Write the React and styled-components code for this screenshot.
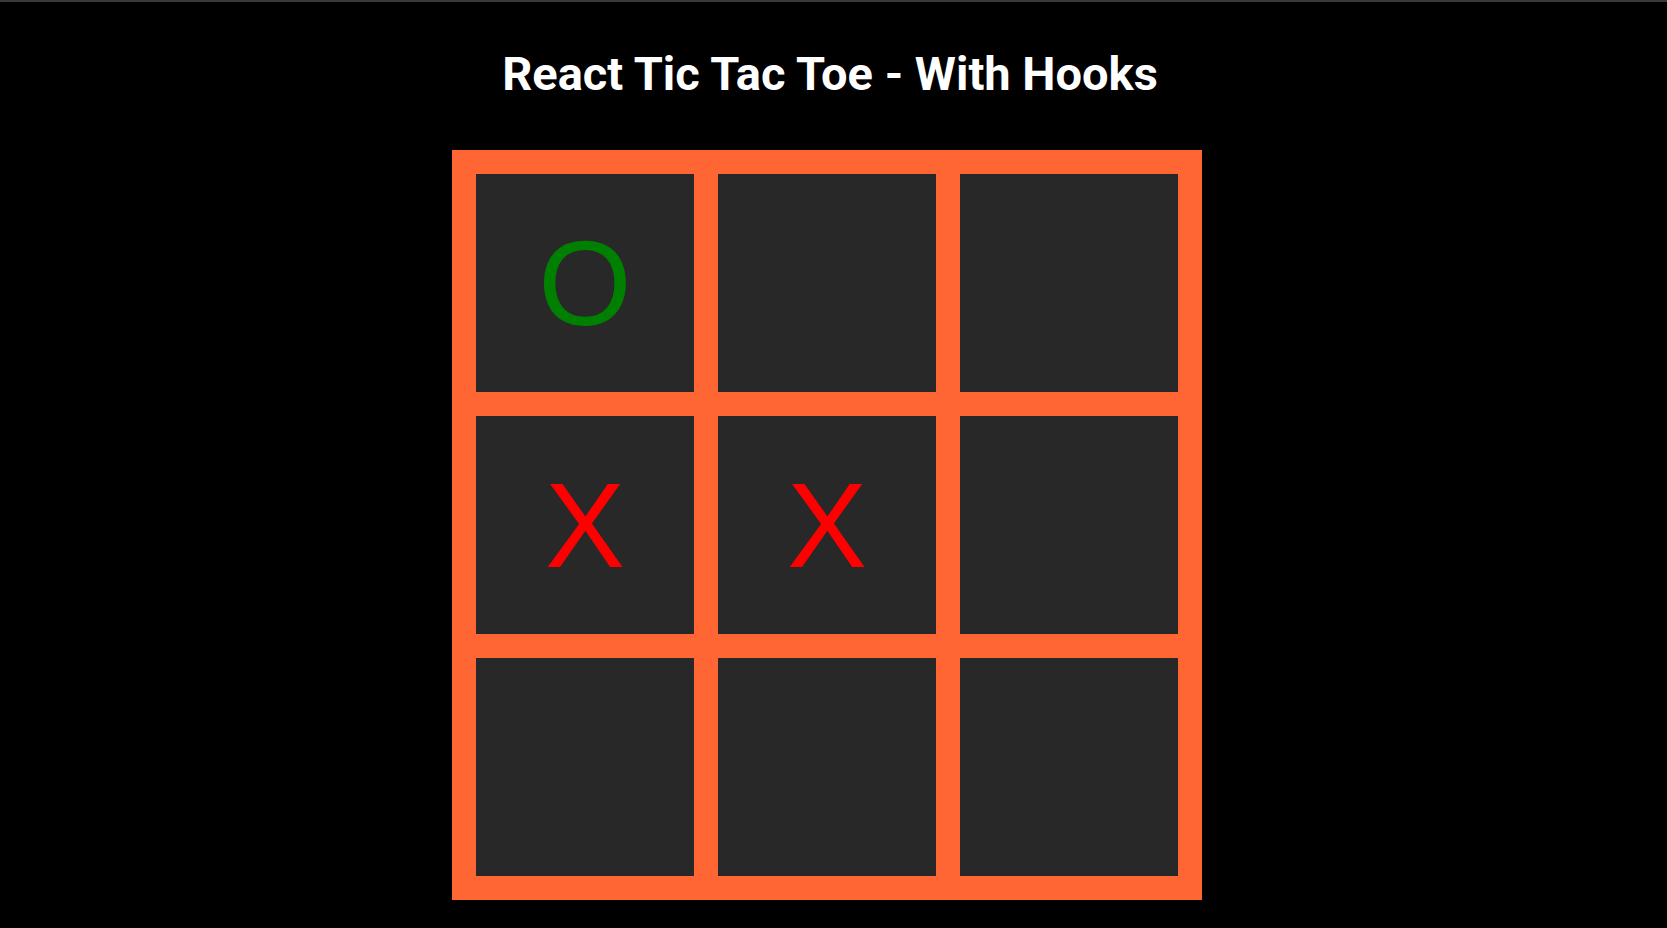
import React, { useState } from 'react';
import styled, { createGlobalStyle } from 'styled-components';

const GlobalStyle = createGlobalStyle`
  html, body {
    margin: 0;
    padding: 0;
    background: #000;
  }
  body {
    border-top: 2px solid #3a3a3a;
    min-height: 926px;
    font-family: Roboto, "Liberation Sans", sans-serif;
  }
`;

const Page = styled.div`
  display: flex;
  flex-direction: column;
  align-items: center;
  padding-right: 13px;
`;

const Title = styled.h1`
  margin: 44px 0 0;
  padding-left: 6px;
  height: 104px;
  font-family: Roboto, sans-serif;
  font-weight: 700;
  font-size: 47px;
  line-height: 56px;
  color: #fff;
`;

const Board = styled.div`
  display: grid;
  grid-template-columns: repeat(3, 218px);
  grid-template-rows: repeat(3, 218px);
  gap: 24px;
  padding: 24px;
  background: #ff6633;
`;

const Cell = styled.button`
  border: none;
  padding: 0;
  margin: 0;
  background: #282828;
  color: ${props => (props.value === 'X' ? '#ff0000' : '#008000')};
  font-family: "Liberation Sans", Arial, sans-serif;
  font-size: 120px;
  line-height: 218px;
  cursor: pointer;
  outline: none;
`;

const initial = ['O', null, null, 'X', 'X', null, null, null, null];

const App = () => {
  const [squares, setSquares] = useState(initial);

  const handleClick = (i) => {
    if (squares[i]) return;
    const xCount = squares.filter(s => s === 'X').length;
    const oCount = squares.filter(s => s === 'O').length;
    const next = squares.slice();
    next[i] = xCount > oCount ? 'O' : 'X';
    setSquares(next);
  };

  return (
    <>
      <GlobalStyle />
      <Page>
        <Title>React Tic Tac Toe - With Hooks</Title>
        <Board>
          {squares.map((value, i) => (
            <Cell key={i} value={value} onClick={() => handleClick(i)}>
              {value}
            </Cell>
          ))}
        </Board>
      </Page>
    </>
  );
};

export default App;
